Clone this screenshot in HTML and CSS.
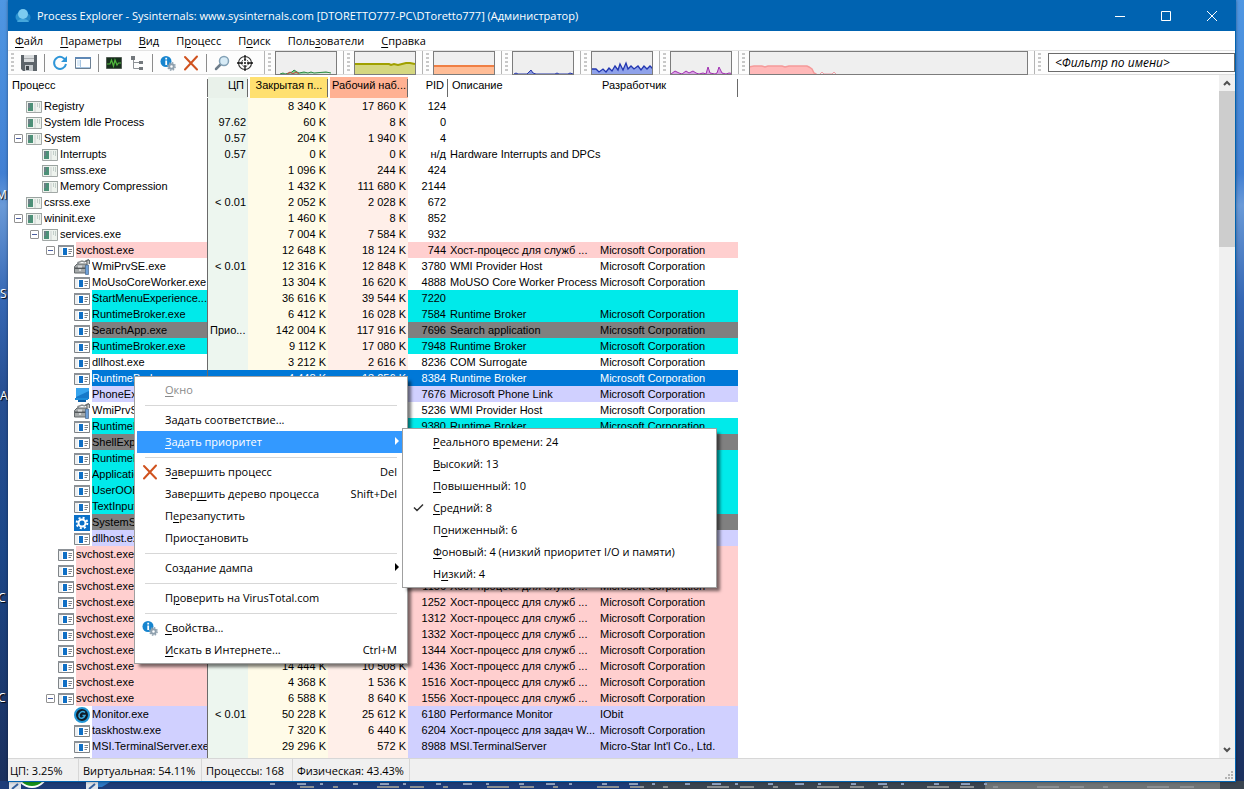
FILE: index.html
```html
<!DOCTYPE html>
<html lang="ru">
<head>
<meta charset="utf-8">
<title>Process Explorer</title>
<link rel="stylesheet" href="styles.css">
</head>
<body>
<svg class="defs" aria-hidden="true">
  <symbol id="i-app" viewBox="0 0 16 16"><path fill="#fff" stroke="#7f8488" d="M.5 2.500h15v11H.5z"/><path fill="#8c9196" d="M0 2h16v2H0z"/><path fill="#eef0f1" d="M1 4h3v9H1z"/><path fill="#0f6fc5" d="M5 5h4v7H5z"/><path stroke="#7c8288" d="M10.500 6.500h3.500M10.500 8.500h3.500M10.500 10.500h2.500"/></symbol>
  <symbol id="i-sys" viewBox="0 0 16 16"><path fill="#eef3ee" stroke="#a2a8a6" d="M.5 2.500h15v11H.5z"/><path fill="#9aa3a0" d="M0 2h16v1H0z"/><path fill="#4c9077" d="M2 4h5v8H2z"/><path fill="#6d7f86" d="M2 4h2v5H2z"/><path fill="#dde2df" d="M8 4h2v9H8z"/><path fill="#c3cfca" d="M11 4h1v4h-1zM13 4h1v5h-1z"/></symbol>
  <symbol id="i-tool" viewBox="0 0 16 16"><path fill="none" stroke="#8b9092" stroke-width="1.500" d="M4 5V3.500l4-1.500 3 1"/><path fill="#a4a8a9" stroke="#63686b" d="M.5 7.500 3 5h9.500v9H.5z"/><path fill="#54595c" d="M1 8.500h11v1.500H1z"/><path fill="#d5d8da" d="M4 6.500h4v2H4zM5 10h2v2H5z"/><path fill="#6fa0d8" stroke="#48688f" stroke-width=".7" d="M11.500 6h3v9.500h-3z"/><path stroke="#6d7274" stroke-width="1.400" d="M13 6V2M11 2.500l4-2M15.300 1v4"/></symbol>
  <symbol id="i-phone" viewBox="0 0 16 16"><path fill="#1679c9" d="M2 1h13v11H2z"/><path fill="#36a4ee" d="M2 1h13v3L2 10z"/><path fill="#1c8bd8" d="M1 11h13v2H1z"/><path fill="#0d5fa6" d="M4 13h8v2H4z"/></symbol>
  <symbol id="i-gear" viewBox="0 0 16 16"><path fill="#0a70c8" d="M0 0h16v16H0z"/><circle cx="8" cy="8" r="3.500" fill="none" stroke="#fff" stroke-width="2"/><circle cx="8" cy="8" r="5.300" fill="none" stroke="#fff" stroke-width="2" stroke-dasharray="2 2.160"/></symbol>
  <symbol id="i-mon" viewBox="0 0 16 16"><circle cx="8" cy="8" r="7" fill="#101c28" stroke="#2196d6" stroke-width="2"/><path fill="none" stroke="#37a9df" stroke-width="1.500" d="M11 5.500C8 3 4.500 6 5 9.500c1 3 5 2 6-1H8.500"/></symbol>
  <symbol id="i-x" viewBox="0 0 16 16"><path fill="none" stroke="#d0521e" stroke-width="2" stroke-linecap="round" d="M2 2l12 12.500M14 1.500 2 14.500"/></symbol>
  <symbol id="i-info" viewBox="0 0 16 16"><circle cx="6" cy="6.500" r="5.500" fill="#1785cf"/><path stroke="#fff" stroke-width="1.800" d="M6.200 5.500v4.500M6.200 2.800v1.600"/><circle cx="11.500" cy="11.500" r="2.300" fill="none" stroke="#8fa0ae" stroke-width="2"/><circle cx="11.500" cy="11.500" r="3.700" fill="none" stroke="#8fa0ae" stroke-width="1.400" stroke-dasharray="1.500 1.400"/></symbol>
</svg>

<div class="desktop">
  <div class="strip" aria-hidden="true">
    <span class="lab l1">М</span><span class="lab l2">S</span><span class="lab l3">А</span><span class="lab l4">С</span><span class="lab l5">С</span>
    <svg class="floor" viewBox="0 0 1244 8" preserveAspectRatio="none">
      <path fill="#1d3c78" d="M0 0h1244v8H0z"/>
      <path fill="#3a4450" d="M640 0h604v8H640z"/>
      <path fill="#6f7476" d="M985 0h235v8H985z"/>
      <circle cx="32" cy="-9" r="16" fill="#fff"/><circle cx="32" cy="-9" r="14" fill="#17941b"/>
      <path fill="#dfe4ea" d="M9 1h12v7H9zM86 1h12v7H86z"/>
      <path stroke="#35609c" stroke-width="2" d="m12 8 6-5m71 5 6-5"/>
      <path fill="#2c78c4" d="M98 1h12l-8 5h-4z"/>
      <path stroke="#93a6c4" stroke-width="2" stroke-dasharray="5 22 9 14 3 30" d="M270 3h720"/>
      <path stroke="#8b8f92" stroke-width="2" stroke-dasharray="14 19 5 39 22 11" d="M300 6h910"/>
    </svg>
  </div>

  <main class="window">
    <header class="titlebar">
      <svg class="logo" viewBox="0 0 16 16"><circle cx="5" cy="9" r="4.500" fill="#2a92cf"/><circle cx="11.500" cy="9.500" r="4" fill="#2487c6"/><circle cx="8" cy="6" r="5" fill="#7ccbf0"/><path fill="#45a7dc" d="M2 14c1-4 11-4 12 0z"/></svg>
      <h1 class="title">Process Explorer - Sysinternals: www.sysinternals.com [DTORETTO777-PC\DToretto777] (Администратор)</h1>
      <button class="winbtn" aria-label="Свернуть"><svg viewBox="0 0 10 10"><path d="M0 5.500h10"/></svg></button>
      <button class="winbtn" aria-label="Развернуть"><svg viewBox="0 0 10 10"><path d="M.5.5h9v9h-9z"/></svg></button>
      <button class="winbtn" aria-label="Закрыть"><svg viewBox="0 0 10 10"><path d="m0 0 10 10M10 0 0 10"/></svg></button>
    </header>

    <nav class="menubar">
      <button><u>Ф</u>айл</button><button><u>П</u>араметры</button><button><u>В</u>ид</button><button>П<u>р</u>оцесс</button><button>П<u>о</u>иск</button><button>Поль<u>з</u>ователи</button><button><u>С</u>правка</button>
    </nav>

    <div class="toolbar">
      <div class="tools">
        <i class="grip"></i>
        <button aria-label="Сохранить"><svg viewBox="0 0 16 16"><path fill="#5d646a" d="M0 0h16v16H2l-2-2z"/><path fill="#d9dcde" d="M3 0h10v7H3z"/><path fill="#a9adb0" d="M3 3h10v1H3z"/><path fill="#c6cacd" d="M4 10h8v6H4z"/><path fill="#42484d" d="M5 11h3v4H5z"/></svg></button>
        <i class="sep"></i>
        <button aria-label="Обновить"><svg viewBox="0 0 16 16"><path fill="none" stroke="#2f96d8" stroke-width="2" d="M13.800 6A6 6 0 1 0 14 9"/><path fill="#2f96d8" d="M15 1v6H9z"/></svg></button>
        <button aria-label="Сведения о системе"><svg viewBox="0 0 16 16"><path fill="#fff" stroke="#6c7f92" d="M.5 2.500h15v11H.5z"/><path fill="#5f88b5" d="M0 2h16v2H0z"/><path fill="#dcebf8" d="M2 5h3v6H2z"/><path fill="#a8c6e2" d="M1 12h14v1H1zM5 5h1v7H5z"/></svg></button>
        <i class="sep"></i>
        <button aria-label="Графики"><svg viewBox="0 0 16 16"><path fill="#16301c" stroke="#535c55" d="M.5 2.500h15v11H.5z"/><path fill="none" stroke="#50b83c" stroke-width="1.200" d="M1 9h3l1.500-4 2 6 1.500-6 2 5 1.500-2H15"/></svg></button>
        <button aria-label="Дерево"><svg viewBox="0 0 16 16"><path fill="#73787c" d="M2 1h4v4H2zM10 6h4v3h-4zM10 12h4v3h-4z"/><path fill="none" stroke="#8d9296" d="M4.500 5v8.500H10M4.500 7.500H10"/></svg></button>
        <i class="sep"></i>
        <button aria-label="Свойства"><svg viewBox="0 0 16 16"><use href="#i-info"/></svg></button>
        <button aria-label="Завершить"><svg viewBox="0 0 16 16"><use href="#i-x"/></svg></button>
        <i class="sep"></i>
        <button aria-label="Найти"><svg viewBox="0 0 16 16"><path stroke="#6e7d8a" stroke-width="2.500" stroke-linecap="round" d="m2 14 4.500-4.500"/><circle cx="10" cy="6" r="4.500" fill="#d7ebf6" stroke="#82a0b5" stroke-width="1.500"/></svg></button>
        <button aria-label="Найти окно"><svg viewBox="0 0 16 16"><circle cx="8" cy="8" r="6.500" fill="#fff" stroke="#333" stroke-width="1.100"/><circle cx="8" cy="8" r="3.500" fill="none" stroke="#333" stroke-dasharray="2 1"/><path stroke="#111" stroke-width="1.300" d="M8 0v6m0 4v6M0 8h6m4 0h6"/><circle cx="8" cy="8" r="1" fill="#111"/></svg></button>
      </div>
      <div class="band"><i class="grip"></i><svg class="graph" viewBox="0 0 60 22" preserveAspectRatio="none"><path fill="#7dc88a" stroke="#2f8a45" d="m4 22 3-1 2 1 4-1 3-1 2-2 3 2 2 1 5-1 4 1 3-1 3 1 12-1 5 1"/><path fill="none" stroke="#d04040" d="m11 22 3-2 3 2 3-2 3 2"/></svg></div>
      <div class="band"><i class="grip"></i><svg class="graph" viewBox="0 0 60 22" preserveAspectRatio="none"><path fill="#d5d780" d="M0 12h60v10H0z"/><path fill="none" stroke="#a0a000" stroke-width="2" d="M0 12h34l2 1 3-1 4 1 4-1 4-1h4l5 1"/></svg></div>
      <div class="band"><i class="grip"></i><svg class="graph" viewBox="0 0 60 22" preserveAspectRatio="none"><path fill="#ffbd97" d="M0 14h60v8H0z"/><path stroke="#ef7f45" stroke-width="2" d="M0 14h60"/></svg></div>
      <div class="band"><i class="grip"></i><svg class="graph" viewBox="0 0 60 22" preserveAspectRatio="none"><path fill="#8898e0" stroke="#2838a8" d="m1 22 2-1 2 1h9l2-2 2-2 2 3 3 1h19l2-1 2 1h9l2-1 3 1"/></svg></div>
      <div class="band"><i class="grip"></i><svg class="graph" viewBox="0 0 60 22" preserveAspectRatio="none"><path fill="#8fa2ea" stroke="#2236b0" stroke-width="1.300" d="M-1 24v-7h5l3 3 4-3 3 3 3-4 3 3 3-5 3 4 2-6 3 6 3-7 2 6 3-3 3 3 4-3 3 4 3-4 3 3 3-3 4 4v7"/></svg></div>
      <div class="band"><i class="grip"></i><svg class="graph" viewBox="0 0 60 22" preserveAspectRatio="none"><path fill="#d9a0e4" stroke="#a030b0" d="m0 22 4-3 4 2 3 1 4-3 3 2 4-2 3 2 3 1 4-1 3 1 2-7 2 6 5 1 2-1 2-6 3 6 4 1 3-1 6 1"/></svg></div>
      <div class="band wide"><i class="grip"></i><svg class="graph" viewBox="0 0 277 22" preserveAspectRatio="none"><path fill="#ffb9b9" stroke="#f59a9a" stroke-width="1.500" d="M-1 24V15l5-1h8l3 1 3-1h14l3 1 4-1h18l2 1 3 2 2 4 2 1v2"/><path fill="none" stroke="#f0a0a8" d="m70 22 2-2 2 2h8l2-2 2 2"/></svg></div>
      <div class="band filter"><i class="grip"></i><input class="search" type="text" aria-label="Фильтр по имени" placeholder="&lt;Фильтр по имени&gt;"></div>
    </div>

    <div class="content">
      <div class="list">
        <table class="grid">
          <colgroup><col class="c-name"><col class="c-num"><col class="c-mem"><col class="c-mem"><col class="c-num"><col class="c-desc"><col class="c-comp"></colgroup>
          <thead><tr><th class="h-name line">Процесс</th><th class="h-cpu line">ЦП</th><th class="h-priv line">Закрытая п...</th><th class="h-ws line">Рабочий наб...</th><th class="h-pid line">PID</th><th>Описание</th><th class="line">Разработчик</th></tr></thead>
          <tbody id="rows"></tbody>
        </table>
      </div>
      <div class="scroll">
        <button aria-label="Вверх"><svg viewBox="0 0 8 6"><path d="m1 5 3-3 3 3"/></svg></button>
        <div class="track"><div class="thumb"></div></div>
        <button aria-label="Вниз"><svg viewBox="0 0 8 6"><path d="m1 1 3 3 3-3"/></svg></button>
      </div>
    </div>

    <footer class="status">
      <span class="s1">ЦП: 3.25%</span><span class="s2">Виртуальная: 54.11%</span><span class="s3">Процессы: 168</span><span class="s4">Физическая: 43.43%</span>
      <svg class="resize" viewBox="0 0 9 9"><path fill="#b4b4b4" d="M6 0h2v2H6zM3 3h2v2H3zM6 3h2v2H6zM0 6h2v2H0zM3 6h2v2H3zM6 6h2v2H6z"/></svg>
    </footer>
  </main>

  <div class="menu main-menu" role="menu">
    <button role="menuitem" disabled><span><u>О</u>кно</span></button>
    <hr>
    <button role="menuitem"><span>За<u>д</u>ать соответствие...</span></button>
    <button role="menuitem" class="active"><span><u>З</u>адать приоритет</span><svg class="arrow" viewBox="0 0 4 8"><path d="m0 0 4 4-4 4z"/></svg></button>
    <hr>
    <button role="menuitem"><svg class="mi" viewBox="0 0 16 16"><use href="#i-x"/></svg><span>З<u>а</u>вершить процесс</span><kbd>Del</kbd></button>
    <button role="menuitem"><span>Завер<u>ш</u>ить дерево процесса</span><kbd>Shift+Del</kbd></button>
    <button role="menuitem"><span>П<u>е</u>резапустить</span></button>
    <button role="menuitem"><span>Приос<u>т</u>ановить</span></button>
    <hr>
    <button role="menuitem"><span>Создание <u>д</u>ампа</span><svg class="arrow" viewBox="0 0 4 8"><path d="m0 0 4 4-4 4z"/></svg></button>
    <hr>
    <button role="menuitem"><span>П<u>р</u>оверить на VirusTotal.com</span></button>
    <hr>
    <button role="menuitem"><svg class="mi" viewBox="0 0 16 16"><use href="#i-info"/></svg><span><u>С</u>войства...</span></button>
    <button role="menuitem"><span><u>И</u>скать в Интернете...</span><kbd>Ctrl+M</kbd></button>
  </div>

  <div class="menu sub-menu" role="menu">
    <button role="menuitem"><span><u>Р</u>еального времени: 24</span></button>
    <button role="menuitem"><span><u>В</u>ысокий: 13</span></button>
    <button role="menuitem"><span><u>П</u>овышенный: 10</span></button>
    <button role="menuitem"><svg class="mi" viewBox="0 0 16 16"><path fill="none" stroke="#333" stroke-width="1.500" d="m4 7.500 3 3 6-6"/></svg><span><u>С</u>редний: 8</span></button>
    <button role="menuitem"><span>П<u>о</u>ниженный: 6</span></button>
    <button role="menuitem"><span><u>Ф</u>оновый: 4 (низкий приоритет I/O и памяти)</span></button>
    <button role="menuitem"><span>Н<u>и</u>зкий: 4</span></button>
  </div>
</div>
<script src="rows.js"></script>
</body>
</html>
```
FILE: styles.css
```css
* { box-sizing: border-box; }
html, body { height: 100%; margin: 0; }
body { font-family: "Open Sans", "Noto Sans", sans-serif; font-size: 11px; color: #000; overflow: hidden; }
button { font: inherit; color: inherit; background: none; border: 0; padding: 0; margin: 0; }
.defs { position: absolute; width: 0; height: 0; }

.desktop { position: relative; height: 100%; padding: 0 8px 7px; background: linear-gradient(90deg, transparent 50%, #4b97e2 50%, transparent 50.1%), linear-gradient(180deg, #4f97e3 0, #4280d3 22%, #6a9ad8 26%, #3567b4 38%, #274f92 50%, #1c4788 70%, #1b2f5c 100%); }
.strip { position: absolute; inset: 0; overflow: hidden; }
.floor { position: absolute; left: 0; bottom: 0; width: 100%; height: 8px; }
.lab { position: absolute; left: 0; color: #fff; font-size: 12px; line-height: 16px; text-shadow: 1px 1px 1px #000; }
.l1 { top: 187px; left: -4px; }
.l2 { top: 286px; }
.l3 { top: 388px; }
.l4 { top: 590px; left: -2px; }
.l5 { top: 690px; left: -2px; }

.window { position: relative; height: 100%; display: flex; flex-direction: column; background: #fff; border: solid #0063b1; border-width: 0 1px 1px 0; box-shadow: 0 0 3px #0006; }
.titlebar { display: flex; align-items: center; height: 31px; flex: none; background: #0063b1; color: #fff; padding-left: 7px; }
.logo { width: 16px; height: 16px; margin-right: 6px; }
.title { flex: 1; margin: 0; font-size: 11px; font-weight: 400; white-space: nowrap; }
.winbtn { width: 46px; height: 30px; display: grid; place-items: center; }
.winbtn svg { width: 10px; height: 10px; overflow: visible; fill: none; stroke: #fff; }

.menubar { display: flex; gap: 17px; height: 20px; flex: none; align-items: center; padding-left: 7px; border-bottom: 1px solid #e3e3e3; }
u { text-underline-offset: 2px; }

.toolbar { display: flex; height: 24px; flex: none; background: #fdfdfd; border-bottom: 1px solid #dcdcdc; }
.tools { display: flex; align-items: center; width: 256px; padding-left: 3px; gap: 7px; }
.tools button { width: 16px; height: 16px; }
.tools svg { display: block; width: 16px; height: 16px; }
.sep { width: 1px; height: 18px; background: #8c8c8c; }
.grip { width: 3px; height: 20px; flex: none; background: repeating-linear-gradient(#c8c8c8 0 2px, transparent 2px 4px); }
.band { display: flex; align-items: center; width: 79px; padding: 0 6px 0 3px; gap: 4px; border-left: 1px solid #b4b4b4; }
.graph { flex: 1; min-width: 0; height: 24px; background: #efefef; border: 1px solid #7c7c7c; }
.wide { flex: 1; }
.filter { width: 201px; padding-right: 0; gap: 7px; }
.search { flex: 1; min-width: 0; height: 19px; border: 1px solid #6b6b6b; padding: 0 6px; font: italic 12px "Open Sans", "Noto Sans", sans-serif; background: #fff; }
.search::placeholder { color: #000; opacity: 1; }

.content { flex: 1; min-height: 0; display: flex; }
.list { flex: 1; min-width: 0; overflow: hidden; }
.grid { table-layout: fixed; width: 730px; border-collapse: separate; border-spacing: 0; font: 11px "Liberation Sans", sans-serif; }
.c-name { width: 200px; }
.c-num { width: 40px; }
.c-mem { width: 80px; }
.c-desc { width: 150px; }
.c-comp { width: 140px; }
th { height: 23px; padding: 0 4px 5px; border-top: 2px solid #fff; font-weight: 400; text-align: left; white-space: nowrap; overflow: hidden; }
.line { background-image: linear-gradient(#6a6a6a, #6a6a6a); background-repeat: no-repeat; background-position: right 2px; background-size: 1px 18px; }
.h-cpu { background-color: #e9f1ea; text-align: right; }
.h-priv { background-color: #ffe070; text-align: center; border-left: 2px solid #fff; padding: 0 2px 5px; }
.h-ws { background-color: #ffb193; text-align: center; border-left: 2px solid #fff; padding: 0 2px 5px; }
.h-pid { text-align: right; }
td { height: 16px; padding: 0 2px; line-height: 16px; white-space: nowrap; }
td:nth-child(1) { padding: 0; border-right: 1px solid #6a6a6a; }
td:nth-child(2) { background: #edf6ef; text-align: right; }
td:nth-child(3) { background: #fffbe8; text-align: right; }
td:nth-child(4) { background: #ffefe9; text-align: right; }
td:nth-child(5) { text-align: right; }
td.state { text-align: left; }
.proc { display: flex; align-items: center; height: 16px; padding-left: 6px; }
.lv1 { padding-left: 22px; }
.lv2 { padding-left: 38px; }
.lv3 { padding-left: 54px; }
.proc svg { width: 16px; height: 16px; flex: none; margin: 0 2px -2px 0; }
.toggle { width: 9px; height: 9px; flex: none; margin: 1px 3px 0 0; border: 1px solid #919191; border-radius: 1px; background: linear-gradient(#4a5ea0, #4a5ea0) center / 5px 1px no-repeat #fff; }
.toggle.none { visibility: hidden; }
.label { flex: 1; min-width: 0; overflow: hidden; }
.pink .label, .pink td:nth-child(n+5) { background: #ffcfcf; }
.cyan .label, .cyan td:nth-child(n+5) { background: #00eaea; }
.gray .label, .gray td:nth-child(n+5) { background: #808080; }
.lilac .label, .lilac td:nth-child(n+5) { background: #d0d0ff; }
.sel .label, .sel td:nth-child(n+2) { background: #0078d7; color: #fff; }

.scroll { width: 16px; flex: none; display: flex; flex-direction: column; background: #f0f0f0; }
.scroll button { height: 16px; display: grid; place-items: center; }
.scroll svg { width: 8px; height: 6px; fill: none; stroke: #505050; stroke-width: 2; }
.track { flex: 1; }
.thumb { height: 24%; background: #cdcdcd; }

.status { display: flex; align-items: center; height: 23px; flex: none; background: #f0f0f0; border-top: 1px solid #d7d7d7; }
.status span { height: 22px; line-height: 24px; padding-left: 4px; border-right: 1px solid #d7d7d7; white-space: nowrap; }
.status .s1 { width: 71px; padding-left: 2px; }
.status .s2 { width: 123px; }
.status .s3 { width: 91px; }
.status .s4 { width: 117px; }
.resize { width: 9px; height: 9px; margin: auto 1px 1px auto; }

.menu { position: absolute; display: flex; flex-direction: column; padding: 2px; background: #fff; border: 1px solid #a0a0a0; box-shadow: 4px 4px 3px -1px #0008; }
.main-menu { left: 134px; top: 376px; width: 274px; }
.sub-menu { left: 402px; top: 428px; width: 315px; }
.menu button { position: relative; display: flex; align-items: center; height: 22px; padding: 0 8px 2px 28px; text-align: left; white-space: nowrap; }
.menu button span { flex: 1; }
.menu button:disabled { color: #8a8a8a; }
.menu .active { background: #3399ff; color: #fff; }
.menu hr { width: auto; height: 1px; margin: 4px 8px 3px; border: 0; background: #d7d7d7; }
.menu kbd { font: inherit; }
.mi { position: absolute; left: 5px; top: 3px; width: 16px; height: 16px; }
.arrow { width: 4px; height: 8px; margin-right: -2px; fill: currentColor; }
```
FILE: rows.js
```js
const CO = "Microsoft Corporation";
const HOST = "Хост-процесс для служб ...";
// level, expander, icon, name, colour, cpu, private, working set, pid, description, company
const data = [
  [0, 0, "sys", "Registry", "", "", "8 340 K", "17 860 K", "124", "", ""],
  [0, 0, "sys", "System Idle Process", "", "97.62", "60 K", "8 K", "0", "", ""],
  [0, 1, "sys", "System", "", "0.57", "204 K", "1 940 K", "4", "", ""],
  [1, 0, "sys", "Interrupts", "", "0.57", "0 K", "0 K", "н/д", "Hardware Interrupts and DPCs", ""],
  [1, 0, "sys", "smss.exe", "", "", "1 096 K", "244 K", "424", "", ""],
  [1, 0, "sys", "Memory Compression", "", "", "1 432 K", "111 680 K", "2144", "", ""],
  [0, 0, "sys", "csrss.exe", "", "< 0.01", "2 052 K", "2 028 K", "672", "", ""],
  [0, 1, "sys", "wininit.exe", "", "", "1 460 K", "8 K", "852", "", ""],
  [1, 1, "sys", "services.exe", "", "", "7 004 K", "7 584 K", "932", "", ""],
  [2, 1, "app", "svchost.exe", "pink", "", "12 648 K", "18 124 K", "744", HOST, CO],
  [3, 0, "tool", "WmiPrvSE.exe", "", "< 0.01", "12 316 K", "12 848 K", "3780", "WMI Provider Host", CO],
  [3, 0, "app", "MoUsoCoreWorker.exe", "", "", "13 304 K", "16 620 K", "4888", "MoUSO Core Worker Process", CO],
  [3, 0, "app", "StartMenuExperience...", "cyan", "", "36 616 K", "39 544 K", "7220", "", ""],
  [3, 0, "app", "RuntimeBroker.exe", "cyan", "", "6 412 K", "16 028 K", "7584", "Runtime Broker", CO],
  [3, 0, "app", "SearchApp.exe", "gray", "Прио...", "142 004 K", "117 916 K", "7696", "Search application", CO],
  [3, 0, "app", "RuntimeBroker.exe", "cyan", "", "9 112 K", "17 080 K", "7948", "Runtime Broker", CO],
  [3, 0, "app", "dllhost.exe", "", "", "3 212 K", "2 616 K", "8236", "COM Surrogate", CO],
  [3, 0, "app", "RuntimeBroker.exe", "sel", "", "4 448 K", "13 256 K", "8384", "Runtime Broker", CO],
  [3, 0, "phone", "PhoneEx", "lilac", "", "", "", "7676", "Microsoft Phone Link", CO],
  [3, 0, "tool", "WmiPrvSE.exe", "", "", "", "", "5236", "WMI Provider Host", CO],
  [3, 0, "app", "RuntimeBroker.exe", "cyan", "", "", "", "9380", "Runtime Broker", CO],
  [3, 0, "app", "ShellExp", "gray", "", "", "", "", "", ""],
  [3, 0, "app", "RuntimeBroker.exe", "cyan", "", "", "", "", "", ""],
  [3, 0, "app", "Applicatio", "cyan", "", "", "", "", "", ""],
  [3, 0, "app", "UserOOBE", "cyan", "", "", "", "", "", ""],
  [3, 0, "app", "TextInput", "cyan", "", "", "", "", "", ""],
  [3, 0, "gear", "SystemSe", "gray", "", "", "", "", "", ""],
  [3, 0, "app", "dllhost.exe", "lilac", "", "", "", "", "", ""],
  [2, 0, "app", "svchost.exe", "pink", "", "", "", "", "", ""],
  [2, 0, "app", "svchost.exe", "pink", "", "", "", "", "", ""],
  [2, 0, "app", "svchost.exe", "pink", "", "", "", "1156", HOST, CO],
  [2, 0, "app", "svchost.exe", "pink", "", "", "", "1252", HOST, CO],
  [2, 0, "app", "svchost.exe", "pink", "", "", "", "1312", HOST, CO],
  [2, 0, "app", "svchost.exe", "pink", "", "", "", "1332", HOST, CO],
  [2, 0, "app", "svchost.exe", "pink", "", "", "", "1344", HOST, CO],
  [2, 0, "app", "svchost.exe", "pink", "", "14 444 K", "10 508 K", "1436", HOST, CO],
  [2, 0, "app", "svchost.exe", "pink", "", "4 368 K", "1 536 K", "1516", HOST, CO],
  [2, 1, "app", "svchost.exe", "pink", "", "6 588 K", "8 640 K", "1556", HOST, CO],
  [3, 0, "mon", "Monitor.exe", "lilac", "< 0.01", "50 228 K", "25 612 K", "6180", "Performance Monitor", "IObit"],
  [3, 0, "app", "taskhostw.exe", "lilac", "", "7 320 K", "6 440 K", "6204", "Хост-процесс для задач W...", CO],
  [3, 0, "app", "MSI.TerminalServer.exe", "lilac", "", "29 296 K", "572 K", "8988", "MSI.TerminalServer", "Micro-Star Int'l Co., Ltd."],
  [3, 0, "app", "taskhostw.exe", "lilac", "", "4 208 K", "5 500 K", "10724", "Хост-процесс для задач W...", CO],
];

const esc = (s) => s.replace(/</g, "&lt;");
document.getElementById("rows").innerHTML = data.map(([lv, open, icon, name, tone, cpu, ...rest]) => `
<tr class="${tone}"><td><div class="proc lv${lv}">${open ? '<button class="toggle" aria-label="Свернуть"></button>' : '<i class="toggle none"></i>'}<svg viewBox="0 0 16 16"><use href="#i-${icon}"/></svg><span class="label">${name}</span></div></td>
<td${/^П/.test(cpu) ? ' class="state"' : ""}>${esc(cpu)}</td>${rest.map((v) => `<td>${v}</td>`).join("")}</tr>`).join("");
```
